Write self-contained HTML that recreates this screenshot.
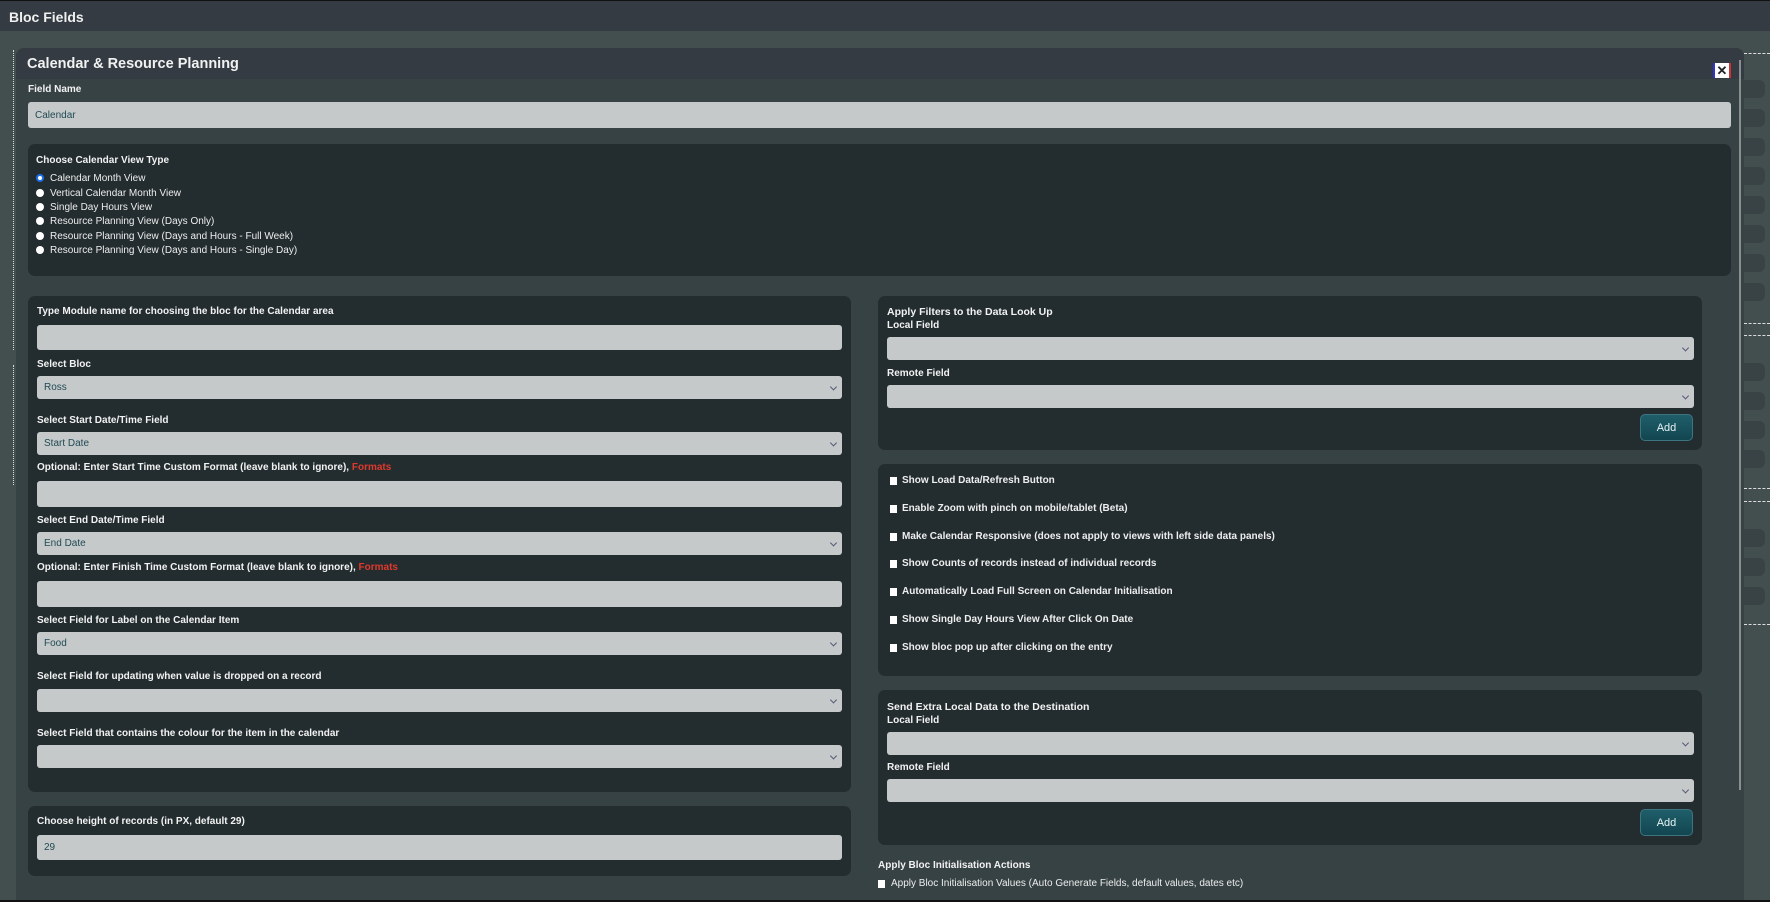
<!DOCTYPE html>
<html><head><meta charset="utf-8"><style>
*{box-sizing:border-box;margin:0;padding:0}
body{width:1770px;height:902px;overflow:hidden;background:#434e4f;font-family:"Liberation Sans",sans-serif;position:relative;color:#fff}
.a{position:absolute}
.top{left:0;top:0;width:1770px;height:31px;background:#343b42;border-top:1px solid #111}
.top span{position:absolute;left:9px;top:8px;font-size:14px;font-weight:bold;color:#f0f0f0}
.modal{left:16px;top:48px;width:1728px;height:853px;background:#374244;border-radius:8px 8px 0 0;overflow:hidden}
.mh{left:0;top:0;width:1728px;height:31px;background:#343b42}
.mh span{position:absolute;left:11px;top:8px;font-size:14.5px;font-weight:bold;color:#f2f2f2}
.lbl{font-size:10px;font-weight:bold;color:#f2f2f2;white-space:nowrap}
.in{background:#c6c9c9;border-radius:3px;color:#1f4a55;font-size:10px;padding-left:7px;display:flex;align-items:center}
.sel::after{content:"";position:absolute;right:6px;top:50%;width:4px;height:4px;border-right:1px solid #557;border-bottom:1px solid #557;transform:translateY(-70%) rotate(45deg)}
.pan{background:#232c2f;border-radius:7px}
.rad{font-size:10px;color:#eee;white-space:nowrap}
.rad i{position:absolute;left:-14px;top:1px;width:8px;height:8px;border-radius:50%;background:#fff}
.cb{font-size:10px;font-weight:bold;color:#eee;white-space:nowrap}
.cb i{position:absolute;left:-12px;top:2px;width:7px;height:8px;background:#fff}
.btn{width:53px;height:27px;background:linear-gradient(#1f5e6a,#124650);border:1px solid #3d7480;border-radius:5px;color:#e8f3f5;font-size:11px;display:flex;align-items:center;justify-content:center}
.red{color:#e0382c}
.tab{left:1744px;width:21px;height:18px;background:#394345;border-radius:0 6px 6px 0}
.dash{left:1744px;width:26px;border-top:1px dashed #ddd}
</style></head><body>
<div class="a top"><span>Bloc Fields</span></div>
<div class="a" style="left:13px;top:50px;height:300px;border-left:1px dotted #ddd"></div>
<div class="a" style="left:13px;top:365px;height:120px;border-left:1px dotted #ddd"></div>
<div class="a dash" style="top:53px"></div>
<div class="a dash" style="top:323px"></div>
<div class="a dash" style="top:335px"></div>
<div class="a dash" style="top:488px"></div>
<div class="a dash" style="top:501px"></div>
<div class="a dash" style="top:624px"></div>
<div class="a tab" style="top:80px"></div><div class="a tab" style="top:109px"></div><div class="a tab" style="top:138px"></div><div class="a tab" style="top:167px"></div><div class="a tab" style="top:196px"></div><div class="a tab" style="top:225px"></div><div class="a tab" style="top:254px"></div><div class="a tab" style="top:283px"></div>
<div class="a tab" style="top:363px"></div><div class="a tab" style="top:392px"></div><div class="a tab" style="top:421px"></div><div class="a tab" style="top:450px"></div>
<div class="a tab" style="top:529px"></div><div class="a tab" style="top:558px"></div><div class="a tab" style="top:587px"></div>

<div class="a modal">
 <div class="a mh"><span>Calendar &amp; Resource Planning</span></div>
</div>
<div class="a" style="left:1713px;top:63px;width:18px;height:15px;background:#fff;border-left:2px solid #33c;border-right:2px solid #c33;color:#222;font-size:13px;font-weight:bold;line-height:15px;text-align:center">✕</div>
<div class="a" style="left:1739px;top:60px;width:2px;height:730px;background:#8a9090"></div>

<div class="a lbl" style="left:28px;top:84px">Field Name</div>
<div class="a in" style="left:28px;top:102px;width:1703px;height:26px">Calendar</div>

<div class="a pan" style="left:28px;top:144px;width:1703px;height:132px"></div>
<div class="a lbl" style="left:36px;top:155px">Choose Calendar View Type</div>
<div class="a rad" style="left:50px;top:173px"><i style="background:#fff;border:2px solid #1a6ee8"></i>Calendar Month View</div>
<div class="a rad" style="left:50px;top:188px"><i></i>Vertical Calendar Month View</div>
<div class="a rad" style="left:50px;top:202px"><i></i>Single Day Hours View</div>
<div class="a rad" style="left:50px;top:216px"><i></i>Resource Planning View (Days Only)</div>
<div class="a rad" style="left:50px;top:231px"><i></i>Resource Planning View (Days and Hours - Full Week)</div>
<div class="a rad" style="left:50px;top:245px"><i></i>Resource Planning View (Days and Hours - Single Day)</div>

<div class="a pan" style="left:28px;top:296px;width:823px;height:496px"></div>
<div class="a lbl" style="left:37px;top:306px">Type Module name for choosing the bloc for the Calendar area</div>
<div class="a in" style="left:37px;top:325px;width:805px;height:25px"></div>
<div class="a lbl" style="left:37px;top:359px">Select Bloc</div>
<div class="a in sel" style="left:37px;top:376px;width:805px;height:23px">Ross</div>
<div class="a lbl" style="left:37px;top:415px">Select Start Date/Time Field</div>
<div class="a in sel" style="left:37px;top:432px;width:805px;height:23px">Start Date</div>
<div class="a lbl" style="left:37px;top:462px">Optional: Enter Start Time Custom Format (leave blank to ignore), <span class="red">Formats</span></div>
<div class="a in" style="left:37px;top:481px;width:805px;height:26px"></div>
<div class="a lbl" style="left:37px;top:515px">Select End Date/Time Field</div>
<div class="a in sel" style="left:37px;top:532px;width:805px;height:23px">End Date</div>
<div class="a lbl" style="left:37px;top:562px">Optional: Enter Finish Time Custom Format (leave blank to ignore), <span class="red">Formats</span></div>
<div class="a in" style="left:37px;top:581px;width:805px;height:26px"></div>
<div class="a lbl" style="left:37px;top:615px">Select Field for Label on the Calendar Item</div>
<div class="a in sel" style="left:37px;top:632px;width:805px;height:23px">Food</div>
<div class="a lbl" style="left:37px;top:671px">Select Field for updating when value is dropped on a record</div>
<div class="a in sel" style="left:37px;top:689px;width:805px;height:23px"></div>
<div class="a lbl" style="left:37px;top:728px">Select Field that contains the colour for the item in the calendar</div>
<div class="a in sel" style="left:37px;top:745px;width:805px;height:23px"></div>

<div class="a pan" style="left:28px;top:806px;width:823px;height:70px"></div>
<div class="a lbl" style="left:37px;top:816px">Choose height of records (in PX, default 29)</div>
<div class="a in" style="left:37px;top:835px;width:805px;height:25px">29</div>

<div class="a pan" style="left:878px;top:296px;width:824px;height:154px"></div>
<div class="a lbl" style="left:887px;top:306px;font-size:10.5px">Apply Filters to the Data Look Up</div>
<div class="a lbl" style="left:887px;top:320px">Local Field</div>
<div class="a in sel" style="left:887px;top:337px;width:807px;height:23px"></div>
<div class="a lbl" style="left:887px;top:368px">Remote Field</div>
<div class="a in sel" style="left:887px;top:385px;width:807px;height:23px"></div>
<div class="a btn" style="left:1640px;top:414px">Add</div>

<div class="a pan" style="left:878px;top:464px;width:824px;height:212px"></div>
<div class="a cb" style="left:902px;top:475px"><i></i>Show Load Data/Refresh Button</div>
<div class="a cb" style="left:902px;top:503px"><i></i>Enable Zoom with pinch on mobile/tablet (Beta)</div>
<div class="a cb" style="left:902px;top:531px"><i></i>Make Calendar Responsive (does not apply to views with left side data panels)</div>
<div class="a cb" style="left:902px;top:558px"><i></i>Show Counts of records instead of individual records</div>
<div class="a cb" style="left:902px;top:586px"><i></i>Automatically Load Full Screen on Calendar Initialisation</div>
<div class="a cb" style="left:902px;top:614px"><i></i>Show Single Day Hours View After Click On Date</div>
<div class="a cb" style="left:902px;top:642px"><i></i>Show bloc pop up after clicking on the entry</div>

<div class="a pan" style="left:878px;top:690px;width:824px;height:155px"></div>
<div class="a lbl" style="left:887px;top:701px;font-size:10.5px">Send Extra Local Data to the Destination</div>
<div class="a lbl" style="left:887px;top:715px">Local Field</div>
<div class="a in sel" style="left:887px;top:732px;width:807px;height:23px"></div>
<div class="a lbl" style="left:887px;top:762px">Remote Field</div>
<div class="a in sel" style="left:887px;top:779px;width:807px;height:23px"></div>
<div class="a btn" style="left:1640px;top:809px">Add</div>

<div class="a lbl" style="left:878px;top:860px">Apply Bloc Initialisation Actions</div>
<div class="a cb" style="left:891px;top:878px;font-weight:normal"><i style="left:-13px"></i>Apply Bloc Initialisation Values (Auto Generate Fields, default values, dates etc)</div>
<div class="a" style="left:0;top:900px;width:1770px;height:2px;background:#111"></div>
</body></html>
